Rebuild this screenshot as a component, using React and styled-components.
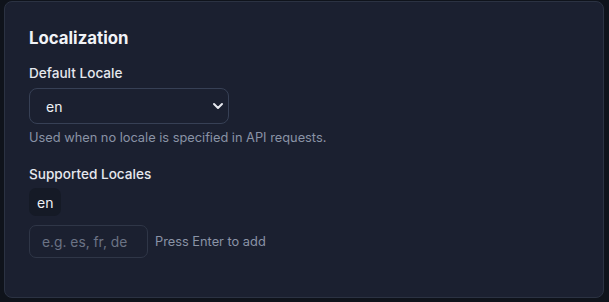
import React from "react";
import styled, { createGlobalStyle } from "styled-components";

const Global = createGlobalStyle`
  html, body { margin: 0; padding: 0; background: #0f131b; }
  body { font-family: Inter, "Noto Sans", sans-serif; -webkit-font-smoothing: antialiased; }
  * { box-sizing: border-box; }
`;

const Page = styled.div`
  width: 609px;
  height: 302px;
  padding: 1px 5px 4px 4px;
`;

const Card = styled.section`
  height: 297px;
  background: #1b2030;
  border: 1px solid #2b3242;
  border-radius: 8px;
  padding: 24px 24px;
  display: flex;
  flex-direction: column;
`;

const Title = styled.h2`
  margin: 0 0 13px;
  font-size: 16.8px;
  line-height: 24px;
  font-weight: 700;
  color: #f1f3f7;
`;

const Label = styled.label`
  display: block;
  font-size: 13.6px;
  line-height: 20px;
  font-weight: 500;
  color: #e6e8ee;
  margin-bottom: ${(p) => p.$mb || 5}px;
`;

const SelectWrap = styled.div`
  position: relative;
  width: 200px;
  height: 36px;
`;

const Select = styled.select`
  appearance: none;
  -webkit-appearance: none;
  width: 100%;
  height: 100%;
  background: #1b2030;
  border: 1px solid #374055;
  border-radius: 8px;
  color: #eef0f4;
  font-family: Inter, sans-serif;
  font-size: 14px;
  padding: 0 0 0 16px;
  outline: none;
`;

const Chevron = styled.svg`
  position: absolute;
  right: 5px;
  top: 13px;
  pointer-events: none;
`;

const Help = styled.p`
  margin: 5px 0 17px;
  font-size: 12.8px;
  line-height: 18px;
  color: #8a93a6;
`;

const Chips = styled.div`
  display: flex;
  gap: 6px;
  margin-bottom: 9px;
`;

const Chip = styled.span`
  display: inline-flex;
  align-items: center;
  height: 28px;
  padding: 0 8px;
  border-radius: 7px;
  background: #151a26;
  color: #eef0f4;
  font-size: 14px;
`;

const AddRow = styled.div`
  display: flex;
  align-items: center;
  gap: 7px;
`;

const Input = styled.input`
  width: 119px;
  height: 33px;
  background: #1b2030;
  border: 1px solid #2f3647;
  border-radius: 7px;
  padding: 0 12px;
  color: #eef0f4;
  font-family: Inter, sans-serif;
  font-size: 13.8px;
  outline: none;
  &::placeholder { color: #6b7385; }
`;

const Hint = styled.span`
  font-size: 12.8px;
  color: #8a93a6;
`;

export default function App() {
  return (
    <>
      <Global />
      <Page>
        <Card>
          <Title>Localization</Title>
          <Label $mb={5}>Default Locale</Label>
          <SelectWrap>
            <Select defaultValue="en">
              <option value="en">en</option>
            </Select>
            <Chevron width="12" height="10" viewBox="0 0 12 10">
              <path d="M2 3 L6 7 L10 3" fill="none" stroke="#e6e8ee" strokeWidth="2" strokeLinecap="round" strokeLinejoin="round" />
            </Chevron>
          </SelectWrap>
          <Help>Used when no locale is specified in API requests.</Help>
          <Label $mb={4}>Supported Locales</Label>
          <Chips>
            <Chip>en</Chip>
          </Chips>
          <AddRow>
            <Input placeholder="e.g. es, fr, de" />
            <Hint>Press Enter to add</Hint>
          </AddRow>
        </Card>
      </Page>
    </>
  );
}
